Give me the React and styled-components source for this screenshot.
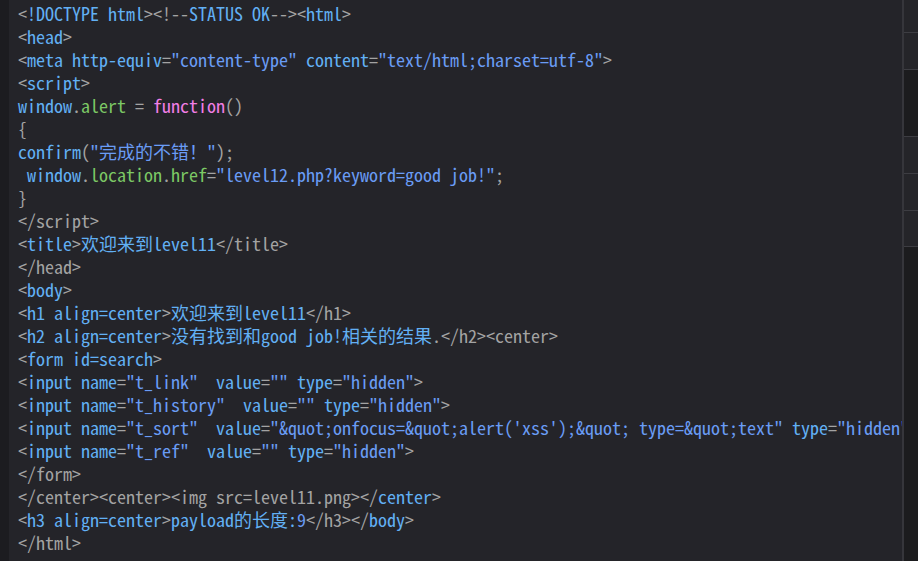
import React from "react";
import styled, { createGlobalStyle } from "styled-components";

const GlobalStyle = createGlobalStyle`
  html, body { margin: 0; padding: 0; background: #242429; overflow: hidden; }
  #root { height: 100vh; }
`;

const Frame = styled.div`
  display: flex;
  height: 100vh;
  background: #242429;
`;

const Gutter = styled.div`
  width: 9px;
  flex: none;
  background: #1c1c20;
`;

const Editor = styled.div`
  flex: 1;
  min-width: 0;
  overflow: hidden;
  padding: 2px 0 0 9px;
  font-family: "Noto Sans Mono CJK SC", "Liberation Mono", monospace;
  font-size: 18px;
  color: #a3a3a3;
`;

const Line = styled.div`
  display: flex;
  height: 23px;
  line-height: 23px;
  white-space: pre;
  overflow: visible;
`;

const colors = {
  p: "#a3a3a3",
  t: "#62b0f4",
  s: "#6a9cf5",
  g: "#7cc865",
  k: "#f27ee6",
};

const Tok = styled.span`
  display: block;
  flex: none;
  height: 23px;
  line-height: 23px;
  color: ${(p) => colors[p.$k]};
`;

const SideRail = styled.div`
  width: 14px;
  flex: none;
  border-left: 2px solid #36363b;
  display: flex;
  flex-direction: column;
  position: relative;
  z-index: 1;
  background: #242429;
`;

const Cell = styled.div`
  height: ${(p) => (p.$h ? `${p.$h}px` : "auto")};
  flex: ${(p) => (p.$h ? "none" : "1")};
  background: ${(p) => (p.$dark ? "#1c1c1e" : "#252529")};
  border-top: ${(p) => (p.$first ? "none" : "1px solid #3d3d42")};
  box-sizing: border-box;
`;

const lines = [
  [["p", "<"], ["t", "!DOCTYPE html"], ["p", "><!--"], ["t", "STATUS OK"], ["p", "--><"], ["t", "html"], ["p", ">"]],
  [["p", "<"], ["t", "head"], ["p", ">"]],
  [["p", "<"], ["t", "meta http-equiv"], ["p", "="], ["s", "\"content-type\""], ["t", " content"], ["p", "="], ["s", "\"text/html;charset=utf-8\""], ["p", ">"]],
  [["p", "<"], ["t", "script"], ["p", ">"]],
  [["t", "window"], ["p", "."], ["g", "alert"], ["p", " = "], ["k", "function"], ["p", "()"]],
  [["p", "{"]],
  [["t", "confirm"], ["p", "("], ["s", "\"完成的不错！\""], ["p", ");"]],
  [["p", " "], ["t", "window"], ["p", "."], ["g", "location"], ["p", "."], ["g", "href"], ["p", "="], ["s", "\"level12.php?keyword=good job!\""], ["p", ";"]],
  [["p", "}"]],
  [["p", "</script>"]],
  [["p", "<"], ["t", "title"], ["p", ">"], ["t", "欢迎来到level11"], ["p", "</title>"]],
  [["p", "</head>"]],
  [["p", "<"], ["t", "body"], ["p", ">"]],
  [["p", "<"], ["t", "h1 align=center"], ["p", ">"], ["t", "欢迎来到level11"], ["p", "</h1>"]],
  [["p", "<"], ["t", "h2 align=center"], ["p", ">"], ["t", "没有找到和good job!相关的结果"], ["p", ".</h2><center>"]],
  [["p", "<"], ["t", "form id=search"], ["p", ">"]],
  [["p", "<"], ["t", "input name"], ["p", "="], ["s", "\"t_link\""], ["t", "  value"], ["p", "="], ["s", "\"\""], ["t", " type"], ["p", "="], ["s", "\"hidden\""], ["p", ">"]],
  [["p", "<"], ["t", "input name"], ["p", "="], ["s", "\"t_history\""], ["t", "  value"], ["p", "="], ["s", "\"\""], ["t", " type"], ["p", "="], ["s", "\"hidden\""], ["p", ">"]],
  [["p", "<"], ["t", "input name"], ["p", "="], ["s", "\"t_sort\""], ["t", "  value"], ["p", "="], ["s", "\"&quot;onfocus=&quot;alert('xss');&quot; type=&quot;text\""], ["t", " type"], ["p", "="], ["s", "\"hidden\""], ["p", ">"]],
  [["p", "<"], ["t", "input name"], ["p", "="], ["s", "\"t_ref\""], ["t", "  value"], ["p", "="], ["s", "\"\""], ["t", " type"], ["p", "="], ["s", "\"hidden\""], ["p", ">"]],
  [["p", "</form>"]],
  [["p", "</center><center><img src=level11.png></"], ["t", "center"], ["p", ">"]],
  [["p", "<"], ["t", "h3 align=center"], ["p", ">"], ["t", "payload的长度:"], ["s", "9"], ["p", "</h3></"], ["t", "body"], ["p", ">"]],
  [["p", "</html>"]],
];

const railCells = [
  { h: 32, first: true },
  { h: 37 },
  { h: 67, dark: true },
  { h: 37 },
  { h: 37 },
  { h: 36 },
  { dark: true },
];

export default function App() {
  return (
    <>
      <GlobalStyle />
      <Frame>
        <Gutter />
        <Editor>
          {lines.map((segs, i) => (
            <Line key={i}>
              {segs.map(([k, text], j) => (
                <Tok key={j} $k={k}>
                  {text}
                </Tok>
              ))}
            </Line>
          ))}
        </Editor>
        <SideRail>
          {railCells.map((c, i) => (
            <Cell key={i} $h={c.h} $dark={c.dark} $first={c.first} />
          ))}
        </SideRail>
      </Frame>
    </>
  );
}
